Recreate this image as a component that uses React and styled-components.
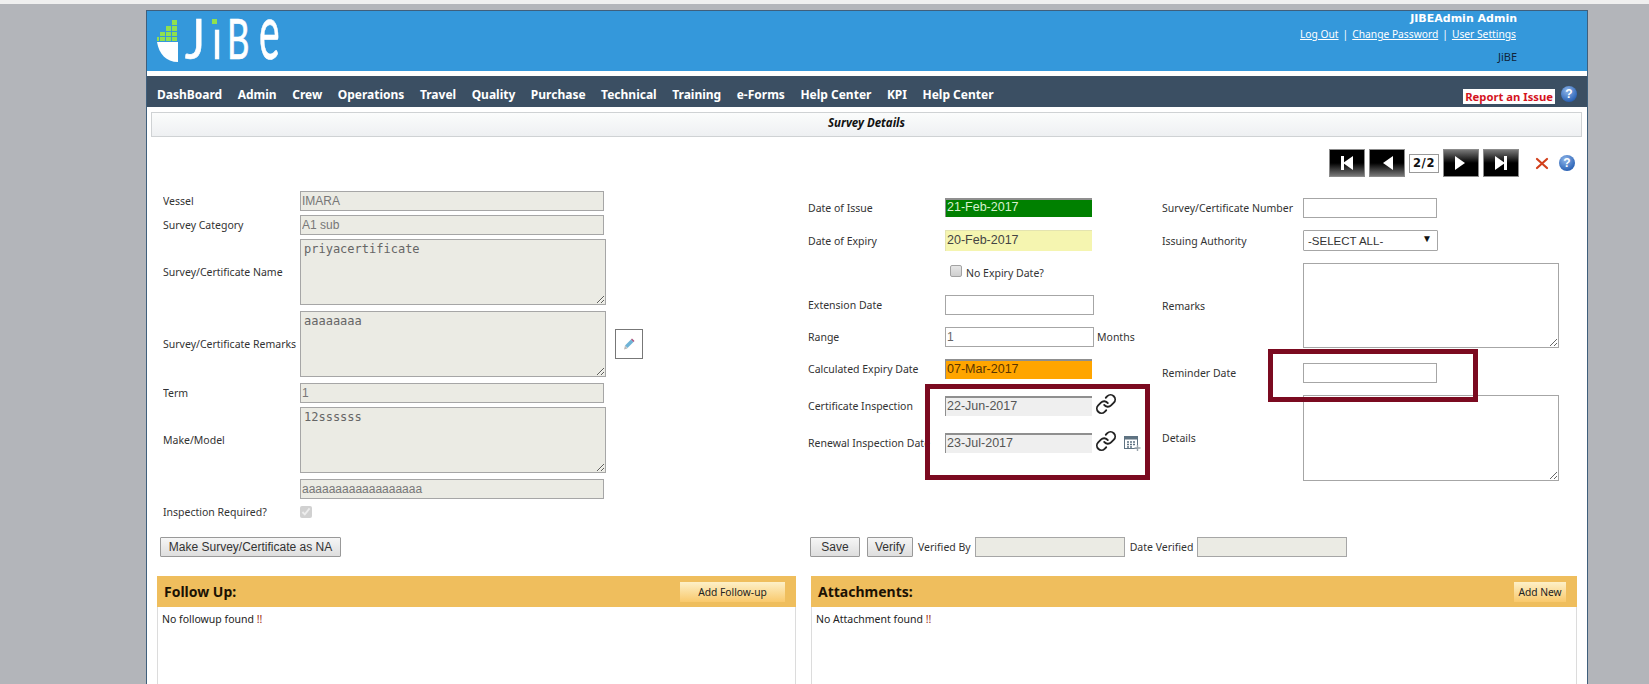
import React from "react";
import styled, {createGlobalStyle} from "styled-components";
import {Link as LinkIcon} from "lucide-react";

const labelFont = `"Noto Sans", "DejaVu Sans", sans-serif`;
const inputFont = `"Liberation Sans", Arial, sans-serif`;
const navItems = ["DashBoard", "Admin", "Crew", "Operations", "Travel", "Quality", "Purchase", "Technical", "Training", "e-Forms", "Help Center", "KPI", "Help Center"];

const GlobalStyle = createGlobalStyle`
  html, body {
    margin: 0;
    height: 684px;
    overflow: hidden;
    background: #b3b5ba;
  }
  * {
    box-sizing: border-box;
  }
`;

const Page = styled.div`
  height: 684px;
  border-top: 4px solid #efefef;
  padding: 6px 61px 0 146px;
  overflow: hidden;
`;

const Shell = styled.div`
  position: relative;
  width: 1442px;
  height: 680px;
  background: #fff;
  border: 1px solid #3f5f7c;
  border-bottom: none;
  font-family: ${labelFont};
`;

const Header = styled.header`
  height: 60px;
  background: #3498db;
  display: flex;
  justify-content: space-between;
`;

const Logo = styled.svg`
  width: 130px;
  height: 60px;
  margin-left: 9px;
  overflow: visible;
`;

const UserBox = styled.div`
  display: flex;
  flex-direction: column;
  align-items: flex-end;
  padding: 0 70px 0 0;
  font-size: 11px;
  color: #fff;
`;

const UserName = styled.div`
  font-family: "DejaVu Sans", sans-serif;
  font-weight: 700;
  line-height: 15px;
`;

const UserLinks = styled.div`
  display: flex;
  gap: 4px;
  font-size: 10.25px;
  line-height: 17px;
  margin-right: 1px;
  a {
    color: #fff;
    text-decoration: underline;
  }
`;

const Company = styled.div`
  color: #10243a;
  margin-top: 6px;
  line-height: 15px;
`;

const Nav = styled.nav`
  height: 31px;
  margin-top: 5px;
  background: #3b4f63;
  display: flex;
  align-items: center;
  padding: 5px 10px 0 10px;
  gap: 15.5px;
  color: #fff;
  font-weight: 700;
  font-size: 12px;
`;

const ReportBox = styled.div`
  margin-left: auto;
  display: flex;
  align-items: center;
  gap: 6px;
`;

const ReportLink = styled.span`
  background: #fff;
  color: #d4141e;
  font-size: 11.25px;
  line-height: 15px;
  padding: 0 2px;
  margin-top: 5px;
`;

const TitleBar = styled.div`
  height: 25px;
  margin: 5px 5px 0 4px;
  border: 1px solid #cfd2d4;
  background: linear-gradient(#fbfcfc, #eef0f2);
  text-align: center;
  font-size: 11.5px;
  font-weight: 700;
  font-style: italic;
  line-height: 20px;
  color: #111;
`;

const PagerRow = styled.div`
  height: 28px;
  margin-top: 12px;
  display: flex;
  align-items: center;
  justify-content: flex-end;
  padding-right: 12px;
`;

const PagerBtn = styled.button`
  width: 36px;
  height: 28px;
  padding: 0;
  margin-right: 4px;
  border: 1px solid #8b8b8b;
  display: flex;
  align-items: center;
  justify-content: center;
  background: ${p => p.$fade === "bottom"
    ? "linear-gradient(#000 50%, #777)"
    : "linear-gradient(#777, #000 50%)"};
`;

const PageCount = styled.span`
  width: 30px;
  height: 19px;
  margin-right: 4px;
  border: 1px solid #999;
  text-align: center;
  line-height: 17px;
  font-family: "DejaVu Sans", sans-serif;
  font-size: 11.5px;
  font-weight: 700;
  letter-spacing: 0.6px;
  color: #111;
`;

const CloseIcon = styled.svg`
  width: 14px;
  height: 14px;
  margin-left: 12px;
`;

const HelpIcon = styled.span`
  width: ${p => p.$size}px;
  height: ${p => p.$size}px;
  margin-left: ${p => p.$ml || 0}px;
  border-radius: 50%;
  background: radial-gradient(circle at 40% 30%, #8fb6ea, #2a62b5 75%);
  color: #fff;
  font: 700 12px/16px "Liberation Sans", sans-serif;
  text-align: center;
  display: inline-block;
`;

const FormArea = styled.div`
  height: 346px;
  margin-top: 14px;
  padding-left: 16px;
  display: grid;
  grid-template-columns: 645px 354px 1fr;
`;

const Column = styled.div`
  padding-top: ${p => p.$top || 0}px;
`;

const Row = styled.div`
  display: grid;
  grid-template-columns: ${p => p.$label}px auto;
  justify-content: start;
  align-items: center;
  margin-top: ${p => p.$mt || 0}px;
  height: ${p => p.$h || 20}px;
`;

const Label = styled.label`
  font-size: 10.5px;
  color: #333;
  white-space: nowrap;
  overflow: hidden;
`;

const Field = styled.div`
  display: flex;
  align-items: center;
`;

const TextInput = styled.input`
  display: block;
  width: ${p => p.$w}px;
  height: ${p => p.$h || 20}px;
  padding: 0 1px;
  border: 1px solid #a6a6a6;
  background: ${p => (p.disabled ? "#ebebe4" : "#fff")};
  font: 12px ${inputFont};
  color: #666;
  opacity: 1;
  &:disabled {
    color: #777;
  }
`;

const DateInput = styled.input`
  display: block;
  width: 147px;
  height: ${p => p.$h || 20}px;
  padding: 0 1px 3px;
  border: none;
  border-top: ${p => p.$flat ? "1px solid #e4e4b0" : "2px solid #8f8f8f"};
  border-left: ${p => p.$flat ? "1px solid #e4e4b0" : "1px solid #8f8f8f"};
  background: ${p => p.$bg};
  font: 12.5px ${inputFont};
  &:disabled {
    color: ${p => p.$color};
  }
`;

const TextArea = styled.textarea`
  display: block;
  width: ${p => p.$w}px;
  height: ${p => p.$h}px;
  padding: 2px 3px;
  border: 1px solid #a6a6a6;
  background: ${p => (p.disabled ? "#ebebe4" : "#fff")};
  font: 12px "DejaVu Sans Mono", monospace;
  color: #666;
  &:disabled {
    color: #666;
  }
`;

const SelectBox = styled.div`
  position: relative;
  width: 135px;
  height: 21px;
  border: 1px solid #a6a6a6;
  border-radius: 1px;
  padding: 0 4px;
  font: 11.5px/20px ${inputFont};
  color: #333;
`;

const SelectArrow = styled.span`
  position: absolute;
  right: 5px;
  top: -2px;
  font-size: 10px;
  color: #111;
`;

const PencilButton = styled.button`
  width: 28px;
  height: 30px;
  margin-left: 9px;
  padding: 0;
  border: 1px solid #777;
  background: #fff;
  display: flex;
  align-items: center;
  justify-content: center;
`;

const CheckBox = styled.input`
  width: 12px;
  height: 12px;
  margin: 0;
`;

const GreyCheck = styled.input`
  appearance: none;
  width: 12px;
  height: 12px;
  margin: -4px 0 0;
  border: 1px solid #a2a2a2;
  border-radius: 2px;
  background: linear-gradient(#e6e6e6, #cfcfcf);
`;

const SmallText = styled.span`
  font-size: 10.5px;
  color: #333;
  margin-left: ${p => p.$ml || 0}px;
  margin-right: ${p => p.$mr || 0}px;
`;

const ChainLink = styled(LinkIcon)`
  margin: -5px 0 0 3px;
`;

const CalendarIcon = styled.svg`
  width: 18px;
  height: 18px;
  margin-left: 6px;
`;

const ActionRow = styled.div`
  height: 20px;
  display: grid;
  grid-template-columns: 650px 1fr;
  padding-left: 13px;
`;

const ActionGroup = styled.div`
  display: flex;
  align-items: center;
`;

const Button = styled.button`
  height: 20px;
  width: ${p => p.$w}px;
  margin-right: ${p => p.$mr || 0}px;
  padding: 0;
  border: 1px solid #999;
  border-radius: 1px;
  background: linear-gradient(#f6f6f6, #dedede);
  font: 12px ${inputFont};
  color: #333;
`;

const Panels = styled.div`
  margin-top: 19px;
  padding-left: 10px;
  display: grid;
  grid-template-columns: 639px 766px;
  column-gap: 15px;
`;

const Panel = styled.section`
  height: 120px;
  border: 1px solid #dcdcdc;
  border-top: none;
`;

const PanelHead = styled.div`
  height: 31px;
  margin: 0 -1px;
  background: #efbe5d;
  display: flex;
  align-items: center;
  justify-content: space-between;
  padding: 0 11px 0 7px;
  font-size: 14px;
  font-weight: 700;
  color: #1b1204;
`;

const AddButton = styled.button`
  width: ${p => p.$w}px;
  height: 20px;
  padding: 0;
  border: none;
  background: linear-gradient(#fdf0c8, #f9c96c);
  font: 10.25px ${labelFont};
  color: #222;
`;

const EmptyText = styled.div`
  padding: 5px 4px;
  font-size: 10.5px;
  color: #222;
  b {
    color: #9a2a12;
    font-weight: 400;
  }
`;

const Highlight = styled.div`
  position: absolute;
  left: ${p => p.$x}px;
  top: ${p => p.$y}px;
  width: ${p => p.$w}px;
  height: ${p => p.$h}px;
  border: 5px solid #7b0a20;
  pointer-events: none;
`;

const LogoLetter = ({x, sx, size, children}) => (
  <text transform={`translate(${x} 48) scale(${sx} 1)`} fontFamily="Lato, sans-serif" fontWeight="400" fontSize={size} fill="#fff" stroke="#fff" strokeWidth="0.7">{children}</text>
);

const Arrow = ({dir, bar}) => (
  <svg width="14" height="14" viewBox="0 0 14 14">
    {dir === "left"
      ? <polygon points="13,0 13,14 3,7" fill="#fff"/>
      : <polygon points="1,0 1,14 11,7" fill="#fff"/>}
    {bar && <rect x={dir === "left" ? 1 : 10} y="0" width="3" height="14" fill="#fff"/>}
  </svg>
);

const App = () => {
  return (
    <Page>
      <GlobalStyle/>
      <Shell>
        <Header>
          <Logo viewBox="0 0 130 60">
            <path d="M1 31h21v20C10 51 3 43 1 31z" fill="#fff"/>
            <g fill="#8fe04f">
              <rect x="16" y="9" width="5" height="5"/>
              <rect x="16" y="15" width="5" height="5"/>
              <rect x="10" y="15" width="5" height="5"/>
              <rect x="16" y="21" width="5" height="4"/>
              <rect x="10" y="21" width="5" height="4"/>
              <rect x="4" y="21" width="5" height="4"/>
              <rect x="16" y="26" width="5" height="4"/>
              <rect x="10" y="26" width="5" height="4"/>
              <rect x="4" y="26" width="5" height="4"/>
              <rect x="1" y="26" width="2" height="4"/>
            </g>
            <rect x="56" y="8" width="5" height="5" fill="#8fe04f"/>
            <LogoLetter x={29} sx={0.85} size={56}>J</LogoLetter>
            <LogoLetter x={56} sx={0.75} size={56}>ı</LogoLetter>
            <LogoLetter x={71} sx={0.62} size={56}>B</LogoLetter>
            <LogoLetter x={103} sx={0.5} size={78}>e</LogoLetter>
          </Logo>
          <UserBox>
            <UserName>JIBEAdmin Admin</UserName>
            <UserLinks>
              <a>Log Out</a><span>|</span><a>Change Password</a><span>|</span><a>User Settings</a>
            </UserLinks>
            <Company>JiBE</Company>
          </UserBox>
        </Header>
        <Nav>
          {navItems.map((item, i) => <span key={i}>{item}</span>)}
          <ReportBox>
            <ReportLink>Report an Issue</ReportLink>
            <HelpIcon $size={16}>?</HelpIcon>
          </ReportBox>
        </Nav>
        <TitleBar>Survey Details</TitleBar>
        <PagerRow>
          <PagerBtn $fade="bottom"><Arrow dir="left" bar/></PagerBtn>
          <PagerBtn $fade="bottom"><Arrow dir="left"/></PagerBtn>
          <PageCount>2/2</PageCount>
          <PagerBtn $fade="top"><Arrow dir="right"/></PagerBtn>
          <PagerBtn $fade="top"><Arrow dir="right" bar/></PagerBtn>
          <CloseIcon viewBox="0 0 14 14">
            <path d="M2 3l10 9M12 3L2 12" stroke="#d2401c" strokeWidth="2.2" strokeLinecap="round"/>
          </CloseIcon>
          <HelpIcon $size={16} $ml={10}>?</HelpIcon>
        </PagerRow>
        <FormArea>
          <Column>
            <Row $label={137}><Label>Vessel</Label><TextInput $w={304} disabled value="IMARA" readOnly/></Row>
            <Row $label={137} $mt={4}><Label>Survey Category</Label><TextInput $w={304} disabled value="A1 sub" readOnly/></Row>
            <Row $label={137} $mt={4} $h={66}><Label>Survey/Certificate Name</Label><TextArea $w={306} $h={66} disabled value="priyacertificate" readOnly/></Row>
            <Row $label={137} $mt={6} $h={66}>
              <Label>Survey/Certificate Remarks</Label>
              <Field>
                <TextArea $w={306} $h={66} disabled value="aaaaaaaa" readOnly/>
                <PencilButton>
                  <svg width="14" height="14" viewBox="0 0 14 14">
                    <path d="M3 8.5L9 2.5l2.5 2.5-6 6z" fill="#6fb3d6"/>
                    <path d="M9 2.5l1-1 2.5 2.5-1 1z" fill="#a8517a"/>
                    <path d="M3 8.5L2 12.5l3.5-1z" fill="#b9b9b9"/>
                  </svg>
                </PencilButton>
              </Field>
            </Row>
            <Row $label={137} $mt={6}><Label>Term</Label><TextInput $w={304} disabled value="1" readOnly/></Row>
            <Row $label={137} $mt={4} $h={66}><Label>Make/Model</Label><TextArea $w={306} $h={66} disabled value="12ssssss" readOnly/></Row>
            <Row $label={137} $mt={6}><Label/><TextInput $w={304} disabled value="aaaaaaaaaaaaaaaaaa" readOnly/></Row>
            <Row $label={137} $mt={5} $h={16}><Label>Inspection Required?</Label><CheckBox type="checkbox" checked disabled readOnly/></Row>
          </Column>
          <Column $top={7}>
            <Row $label={137} $h={19}><Label>Date of Issue</Label><DateInput $h={19} $bg="#008000" $color="#d8f0d0" disabled value="21-Feb-2017" readOnly/></Row>
            <Row $label={137} $mt={13} $h={21}><Label>Date of Expiry</Label><DateInput $h={21} $flat $bg="#f5f5b0" $color="#444" disabled value="20-Feb-2017" readOnly/></Row>
            <Row $label={142} $mt={15} $h={14}><span/><Field><GreyCheck type="checkbox" disabled/><SmallText $ml={4}>No Expiry Date?</SmallText></Field></Row>
            <Row $label={137} $mt={15}><Label>Extension Date</Label><TextInput $w={149}/></Row>
            <Row $label={137} $mt={12}><Label>Range</Label><Field><TextInput $w={149} defaultValue="1"/><SmallText $ml={3}>Months</SmallText></Field></Row>
            <Row $label={137} $mt={12}><Label>Calculated Expiry Date</Label><DateInput $bg="#ffa500" $color="#5a3500" disabled value="07-Mar-2017" readOnly/></Row>
            <Row $label={137} $mt={17}><Label>Certificate Inspection</Label><Field><DateInput $bg="#efefef" $color="#555" disabled value="22-Jun-2017" readOnly/><ChainLink size={22} color="#222" strokeWidth={2}/></Field></Row>
            <Row $label={137} $mt={17}>
              <Label>Renewal Inspection Date</Label>
              <Field>
                <DateInput $bg="#efefef" $color="#555" disabled value="23-Jul-2017" readOnly/>
                <ChainLink size={22} color="#222" strokeWidth={2}/>
                <CalendarIcon viewBox="0 0 18 18">
                  <rect x="1.5" y="2.5" width="13" height="12" fill="#fff" stroke="#5f7382"/>
                  <rect x="1.5" y="2.5" width="13" height="3" fill="#5f7382"/>
                  <path d="M4 8h2M7 8h2M10 8h2M4 10.5h2M7 10.5h2M10 10.5h2M4 13h2M7 13h2" stroke="#5f7382" strokeWidth="1.4"/>
                  <path d="M14.5 11v6M11.5 14h6" stroke="#9aa4ab" strokeWidth="1.4"/>
                </CalendarIcon>
              </Field>
            </Row>
          </Column>
          <Column $top={7}>
            <Row $label={141}><Label>Survey/Certificate Number</Label><TextInput $w={134}/></Row>
            <Row $label={141} $mt={12} $h={21}>
              <Label>Issuing Authority</Label>
              <SelectBox>-SELECT ALL-<SelectArrow>▼</SelectArrow></SelectBox>
            </Row>
            <Row $label={141} $mt={12} $h={85}><Label>Remarks</Label><TextArea $w={256} $h={85}/></Row>
            <Row $label={141} $mt={15}><Label>Reminder Date</Label><TextInput $w={134}/></Row>
            <Row $label={141} $mt={12} $h={86}><Label>Details</Label><TextArea $w={256} $h={86}/></Row>
          </Column>
        </FormArea>
        <ActionRow>
          <ActionGroup><Button $w={181}>Make Survey/Certificate as NA</Button></ActionGroup>
          <ActionGroup>
            <Button $w={50} $mr={7}>Save</Button>
            <Button $w={46} $mr={5}>Verify</Button>
            <SmallText $mr={4}>Verified By</SmallText>
            <TextInput $w={150} disabled/>
            <SmallText $ml={5} $mr={4}>Date Verified</SmallText>
            <TextInput $w={150} disabled/>
          </ActionGroup>
        </ActionRow>
        <Panels>
          <Panel>
            <PanelHead>Follow Up:<AddButton $w={105}>Add Follow-up</AddButton></PanelHead>
            <EmptyText>No followup found <b>!!</b></EmptyText>
          </Panel>
          <Panel>
            <PanelHead>Attachments:<AddButton $w={52}>Add New</AddButton></PanelHead>
            <EmptyText>No Attachment found <b>!!</b></EmptyText>
          </Panel>
        </Panels>
        <Highlight $x={778} $y={373} $w={225} $h={96}/>
        <Highlight $x={1121} $y={338} $w={210} $h={53}/>
      </Shell>
    </Page>
  );
};

export default App;
